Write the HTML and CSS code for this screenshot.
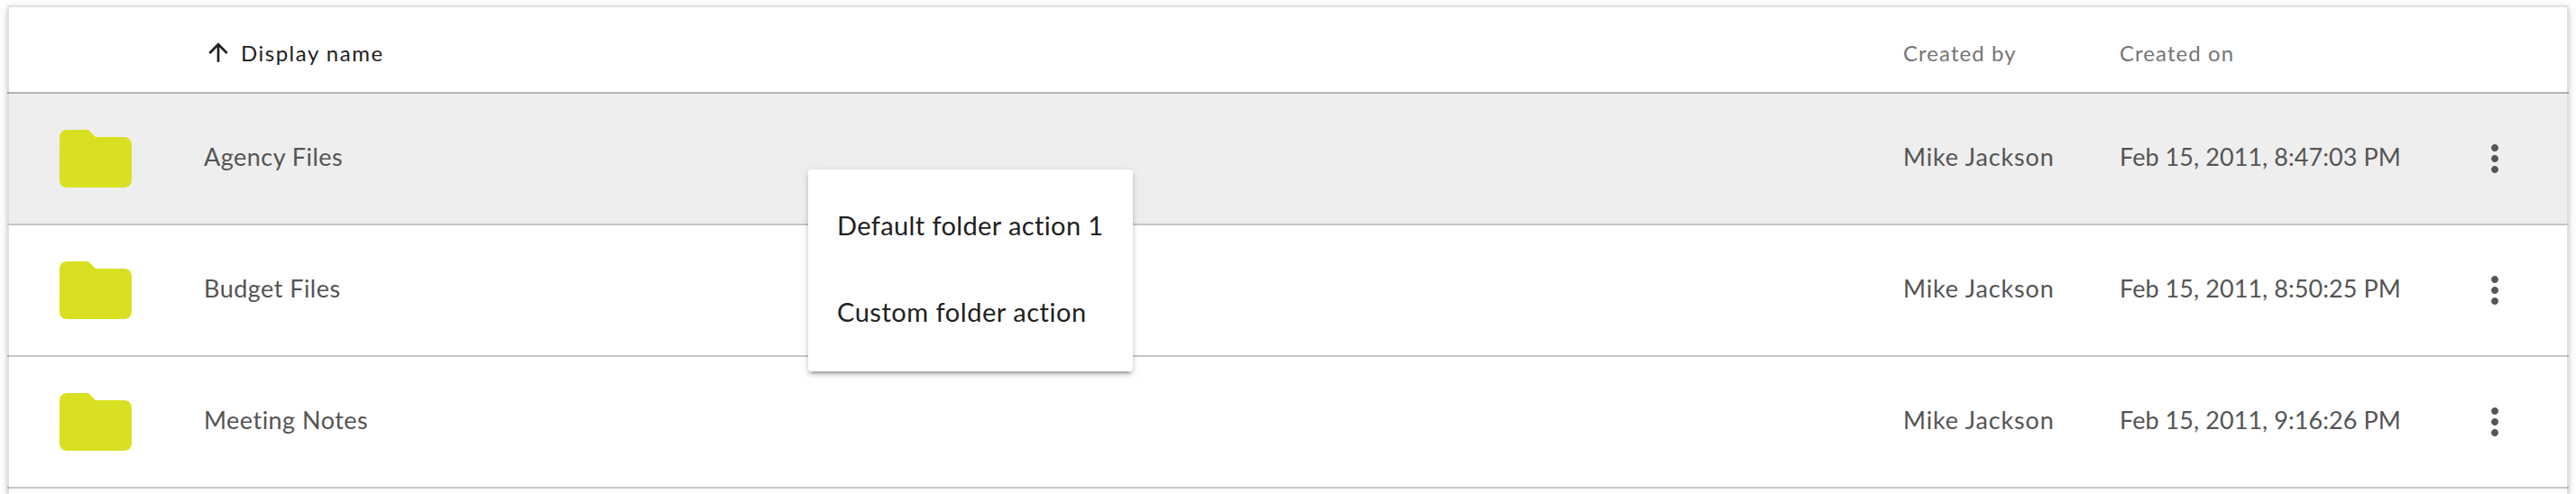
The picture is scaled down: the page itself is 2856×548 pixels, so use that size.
FILE: index.html
```html
<!DOCTYPE html>
<html lang="en">
<head>
<meta charset="utf-8">
<title>Files</title>
<link rel="stylesheet" href="styles.css">
</head>
<body>
<svg class="sprite" aria-hidden="true">
  <symbol id="folder" viewBox="0 0 24 24"><path d="M10 4H4c-1.1 0-1.99.9-1.99 2L2 18c0 1.1.9 2 2 2h16c1.1 0 2-.9 2-2V8c0-1.1-.9-2-2-2h-8l-2-2z"/></symbol>
  <symbol id="more" viewBox="0 0 24 24"><path d="M12 8c1.1 0 2-.9 2-2s-.9-2-2-2-2 .9-2 2 .9 2 2 2zm0 2c-1.1 0-2 .9-2 2s.9 2 2 2 2-.9 2-2-.9-2-2-2zm0 6c-1.1 0-2 .9-2 2s.9 2 2 2 2-.9 2-2-.9-2-2-2z"/></symbol>
  <symbol id="arrow-up" viewBox="0 0 24 24"><path d="M4 12l1.41 1.41L11 7.83V20h2V7.83l5.58 5.59L20 12l-8-8-8 8z"/></symbol>
</svg>

<main class="table">
  <div class="row row-head">
    <div></div>
    <div class="sorted"><svg class="arrow"><use href="#arrow-up"/></svg><span class="label">Display name</span></div>
    <div class="label label-by">Created by</div>
    <div class="label label-on">Created on</div>
    <div></div>
  </div>
  <div class="row row-hover">
    <svg class="folder"><use href="#folder"/></svg>
    <div class="cell name">Agency Files</div>
    <div class="cell by">Mike Jackson</div>
    <div class="cell date">Feb 15, 2011, 8:47:03 PM</div>
    <svg class="more"><use href="#more"/></svg>
  </div>
  <div class="row">
    <svg class="folder"><use href="#folder"/></svg>
    <div class="cell name">Budget Files</div>
    <div class="cell by">Mike Jackson</div>
    <div class="cell date">Feb 15, 2011, 8:50:25 PM</div>
    <svg class="more"><use href="#more"/></svg>
  </div>
  <div class="row">
    <svg class="folder"><use href="#folder"/></svg>
    <div class="cell name">Meeting Notes</div>
    <div class="cell by">Mike Jackson</div>
    <div class="cell date">Feb 15, 2011, 9:16:26 PM</div>
    <svg class="more"><use href="#more"/></svg>
  </div>
</main>

<div class="menu">
  <div class="menu-item">Default folder action 1</div>
  <div class="menu-item menu-item-custom">Custom folder action</div>
</div>
</body>
</html>
```

FILE: styles.css
```css
* {
  box-sizing: border-box;
}

body {
  margin: 0;
  height: 548px;
  padding: 6px 8px 0;
  overflow: hidden;
  background: #fff;
  font-family: Lato, "Liberation Sans", sans-serif;
  line-height: 1.2;
  white-space: nowrap;
}

.sprite {
  position: absolute;
  width: 0;
  height: 0;
}

.table {
  height: 542px;
  border: 2px solid rgba(0, 0, 0, 0.12);
  border-bottom: 0;
  background: #fff;
  box-shadow: 0 6px 2px -4px rgba(0, 0, 0, 0.2), 0 4px 4px 0 rgba(0, 0, 0, 0.14), 0 2px 10px 0 rgba(0, 0, 0, 0.12);
}

.row {
  display: grid;
  grid-template-columns: 216px 1fr 240px 393px 104px;
  align-items: center;
  height: 146px;
  margin: 0 -2px;
  padding: 0 2px;
  border-bottom: 2px solid rgba(0, 0, 0, 0.22);
}

.row-head {
  height: 96px;
  padding-top: 6px;
  border-bottom-color: rgba(0, 0, 0, 0.29);
}

.row-hover {
  background: #eee content-box;
  border-bottom-color: #c6c6c6;
}

.sorted {
  display: flex;
  align-items: center;
  gap: 9px;
  color: #212121;
}

.arrow {
  width: 32px;
  height: 32px;
  fill: #212121;
}

.label {
  padding-top: 3px;
  font-size: 24px;
  letter-spacing: 1.5px;
}

.label-by,
.label-on {
  padding-left: 1px;
  color: #757575;
  letter-spacing: 1.08px;
}

.folder {
  width: 96px;
  height: 96px;
  margin-left: 48px;
  fill: #d9e021;
}

.cell {
  padding-bottom: 3px;
  font-size: 27px;
  letter-spacing: 0.47px;
  color: #555;
}

.by {
  padding-left: 1px;
  letter-spacing: 0.83px;
}

.date {
  padding-left: 1px;
  letter-spacing: 0.06px;
}

.more {
  width: 48px;
  height: 48px;
  fill: #555;
}

.menu {
  position: absolute;
  left: 896px;
  top: 188px;
  width: 360px;
  height: 224px;
  padding: 16px 32px;
  border-radius: 4px;
  background: #fff;
  box-shadow: 0 6px 2px -4px rgba(0, 0, 0, 0.2), 0 4px 4px 0 rgba(0, 0, 0, 0.14), 0 2px 10px 0 rgba(0, 0, 0, 0.12);
}

.menu-item {
  height: 96px;
  line-height: 91px;
  font-size: 29px;
  letter-spacing: 0.38px;
  color: #212121;
}

.menu-item-custom {
  letter-spacing: 0.53px;
}
```
